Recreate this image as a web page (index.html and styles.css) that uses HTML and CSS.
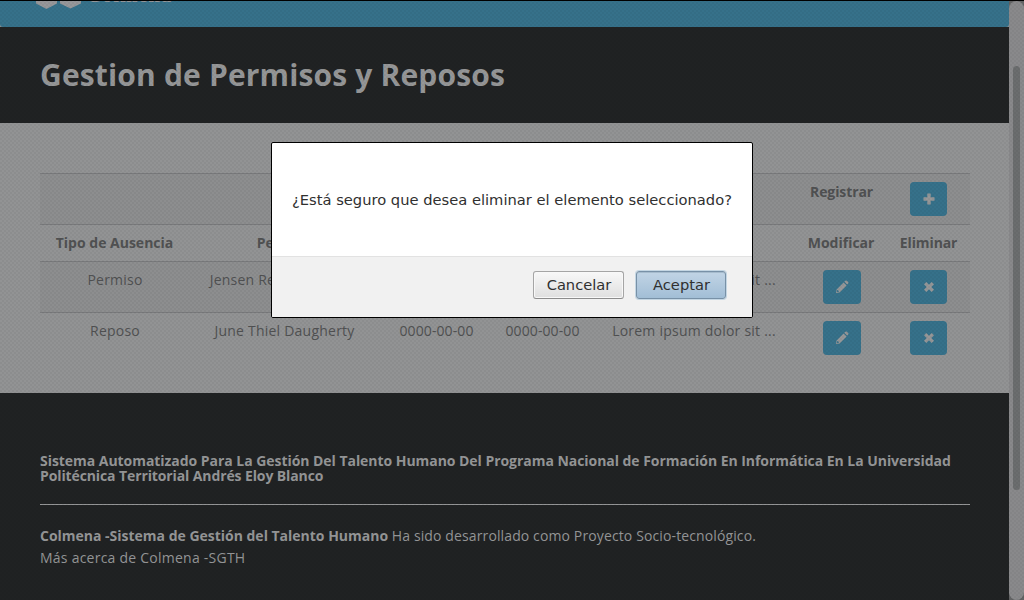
FILE: index.html
```html
<!DOCTYPE html>
<html lang="es">
<head>
<meta charset="utf-8">
<title>Gestion de Permisos y Reposos</title>
<link rel="stylesheet" href="styles.css">
</head>
<body>
<div class="viewport">
  <div class="page">
    <header class="navbar">
      <div class="brand">
        <svg class="logo" width="46" height="40" viewBox="0 0 46 40"><path d="M0 20h21v14.500L10.500 40 0 34.500zM24 20h21v14.500L34.500 39.500 24 34.500z"/></svg>
        <span class="brand-name">Colmena</span>
      </div>
    </header>
    <div class="banner"><h1>Gestion de Permisos y Reposos</h1></div>
    <main class="content">
      <table class="grid">
        <colgroup><col class="c1"><col class="c2"><col class="c3"><col class="c4"><col class="c5"><col class="c6"><col class="c7"></colgroup>
        <tr class="odd tall"><td colspan="5"></td><th>Registrar</th><td><button class="action"><svg width="12" height="12" viewBox="0 0 12 12"><path d="M4.300 .5h3.400v3.800h3.800v3.400h-3.800v3.800h-3.400v-3.800h-3.800v-3.400h3.800z"/></svg></button></td></tr>
        <tr class="head"><th>Tipo de Ausencia</th><th class="person">Persona</th><th>Desde</th><th>Hasta</th><th>Motivo</th><th>Modificar</th><th>Eliminar</th></tr>
        <tr class="odd tall"><td>Permiso</td><td>Jensen Reichel Maggio</td><td class="date">0000-00-00</td><td class="date">0000-00-00</td><td>Lorem ipsum dolor sit ...</td>
          <td><button class="action edit"><svg width="14" height="14" viewBox="0 0 14 14"><path fill-rule="evenodd" d="M9.300 1.700 10.400.8q.8-.6 1.500 0l1.300 1.300q.6.8 0 1.500l-1 1zM8.600 2.400l3 3-7 7L1 13l.6-3.600zM2.300 10l-.4 2.100 2-.4v-.9h-.8V10z"/></svg></button></td>
          <td><button class="action"><svg width="12" height="12" viewBox="0 0 12 12"><path d="M3.300 1 6 3.700 8.700 1 11 3.300 8.300 6 11 8.700 8.700 11 6 8.300 3.300 11 1 8.700 3.700 6 1 3.300z"/></svg></button></td></tr>
        <tr class="tall"><td>Reposo</td><td>June Thiel Daugherty</td><td class="date">0000-00-00</td><td class="date">0000-00-00</td><td>Lorem ipsum dolor sit ...</td>
          <td><button class="action edit"><svg width="14" height="14" viewBox="0 0 14 14"><path fill-rule="evenodd" d="M9.300 1.700 10.400.8q.8-.6 1.500 0l1.300 1.300q.6.8 0 1.500l-1 1zM8.600 2.400l3 3-7 7L1 13l.6-3.600zM2.300 10l-.4 2.100 2-.4v-.9h-.8V10z"/></svg></button></td>
          <td><button class="action"><svg width="12" height="12" viewBox="0 0 12 12"><path d="M3.300 1 6 3.700 8.700 1 11 3.300 8.300 6 11 8.700 8.700 11 6 8.300 3.300 11 1 8.700 3.700 6 1 3.300z"/></svg></button></td></tr>
      </table>
    </main>
    <footer class="footer">
      <h5>Sistema Automatizado Para La Gestión Del Talento Humano Del Programa Nacional de Formación En Informática En La Universidad <span class="second">Politécnica Territorial Andrés Eloy Blanco</span></h5>
      <hr>
      <p><strong>Colmena -Sistema de Gestión del Talento Humano</strong> Ha sido desarrollado como Proyecto Socio-tecnológico.</p>
      <p class="about">Más acerca de Colmena -SGTH</p>
    </footer>
  </div>
  <div class="scrollbar"><div class="thumb"></div></div>
</div>
<div class="texture"></div>
<div class="overlay">
  <div class="dialog" role="dialog">
    <div class="message">¿Está seguro que desea eliminar el elemento seleccionado?</div>
    <div class="buttons"><button class="btn">Cancelar</button><button class="btn primary">Aceptar</button></div>
  </div>
</div>
</body>
</html>
```
FILE: styles.css
```css
* { box-sizing: border-box; }
body { margin: 0; height: 600px; overflow: hidden; background: #1f2122; font: 14px/20px "Open Sans", sans-serif; color: #505152; }
.viewport { display: flex; height: 600px; border-top: 1px solid #000; background: #626364; }
.page { width: 1009px; height: 599px; overflow: hidden; background: #929394; }
.navbar { height: 26px; background: #36718a; border-radius: 0 0 3px 3px; overflow: hidden; }
.brand { display: flex; margin: -32px 0 0 36px; }
.logo { fill: #96979a; }
.brand-name { margin: 11px 0 0 4px; font: bold 21px/30px "Liberation Serif", serif; letter-spacing: .8px; color: #96979a; }
.banner { height: 96px; padding: 26px 40px; background: #202223; color: #959697; }
.banner h1 { margin: 0; font-size: 30px; line-height: 44px; letter-spacing: .16px; }
.content { height: 270px; padding: 50px 39px 0 40px; }
.grid { width: 930px; table-layout: fixed; border-collapse: collapse; text-align: center; }
.grid td, .grid th { padding: 8px 0; vertical-align: top; border-top: 1px solid #797a7c; white-space: nowrap; }
.grid td { padding-left: 1px; letter-spacing: .23px; }
.grid td.date { letter-spacing: .1px; }
.grid .person { padding-left: 2px; }
.grid th:nth-child(7), .grid .tall th { letter-spacing: -.1px; padding-left: 1px; }
.grid .odd { background: #8d8e8f; }
.tall { height: 51px; }
.head { height: 37px; }
.c1 { width: 149px; }
.c2 { width: 190px; }
.c3 { width: 114px; }
.c4 { width: 98px; }
.c5 { width: 205px; }
.c6 { width: 90px; }
.c7 { width: 84px; }
.action { display: flex; align-items: center; justify-content: center; width: 37px; height: 34px; margin: 0 auto; padding: 0; border: 0; border-radius: 4px; background: #36718a; }
.action.edit { width: 38px; }
.action svg { fill: #969798; }
.footer { height: 207px; padding: 60px 39px 0 40px; background: #202223; color: #959697; }
.footer h5 { margin: 0; font-size: 14px; line-height: 15px; letter-spacing: -.044px; }
.footer .second { letter-spacing: -.11px; }
.footer hr { height: 1px; margin: 21px 0 20px; border: 0; background: #959697; }
.footer p { margin: 0; line-height: 22px; letter-spacing: .12px; }
.footer strong { letter-spacing: -.01px; }
.footer .about { letter-spacing: .24px; }
.scrollbar { width: 15px; height: 599px; padding: 65px 4px 0; border-radius: 8px; background: #89898b; }
.thumb { width: 7px; height: 424px; border-radius: 4px; background: #6b6d6e; }
.texture { position: absolute; inset: 0; background: repeating-conic-gradient(rgba(0,0,0,.04) 0 25%, transparent 0 50%) 0 0 / 4px 4px; }
.overlay { position: absolute; inset: 0; display: flex; justify-content: center; padding-top: 142px; }
.dialog { width: 482px; height: 176px; border: 1px solid #000; border-radius: 2px; background: #fff; color: #303030; font: 14.69px/20px "DejaVu Sans", sans-serif; overflow: hidden; }
.message { height: 114px; padding: 47px 20px 0; border-bottom: 1px solid #e2e2e2; white-space: nowrap; }
.buttons { display: flex; justify-content: flex-end; gap: 12px; height: 60px; padding: 14px 26px; background: #f1f1f1; }
.btn { width: 91px; height: 28px; padding: 0 0 0 1px; border: 1px solid #a5a5a5; border-bottom-color: #8c8c8c; border-radius: 3px; background: linear-gradient(#f8f8f8, #dfdfdf); box-shadow: inset 0 0 0 1px #f8f8f8; color: #303030; font: 14.67px/20px "DejaVu Sans", sans-serif; }
.btn.primary { width: 90px; border-color: #7891a7; background: linear-gradient(#c1d4e5, #a2bed6); box-shadow: 0 0 0 1px #c4d6e3, inset 0 1px #a6bbcd; }
```
